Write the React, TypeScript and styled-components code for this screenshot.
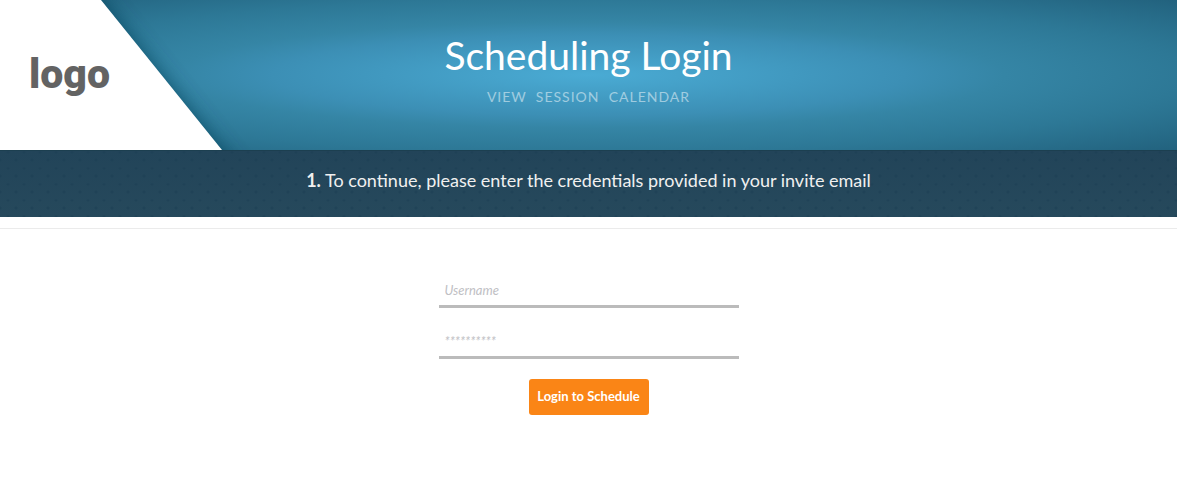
import React from 'react';
import styled, { createGlobalStyle } from 'styled-components';

const GlobalStyle = createGlobalStyle`
  *, *::before, *::after { box-sizing: border-box; }
  body {
    margin: 0;
    background: #fff;
    font-family: Lato, "Liberation Sans", sans-serif;
  }
`;

const Header = styled.header`
  position: relative;
  height: 150px;
  padding-top: 31px;
  overflow: hidden;
  text-align: center;
  color: #fff;
  background: radial-gradient(
    ellipse farthest-corner at center,
    #4aabd4 0%,
    #3c8fb5 38%,
    #3585a5 50%,
    #2d7896 72%,
    #22627e 100%
  );
`;

const Brand = styled.a`
  position: absolute;
  inset: 0 auto 0 0;
  width: 300px;
  display: flex;
  align-items: center;
  padding: 0 0 2px 29px;
  text-decoration: none;
`;

const BrandShape = styled.svg`
  position: absolute;
  inset: 0;
  width: 300px;
  height: 150px;
`;

const LogoText = styled.span`
  position: relative;
  color: #636363;
  font: 900 41px/48px Roboto, sans-serif;
`;

const Title = styled.h1`
  margin: 0;
  font-size: 39px;
  line-height: 48px;
  font-weight: 400;
`;

const Subtitle = styled.p`
  margin: 9px 0 0;
  font-size: 14px;
  line-height: 18px;
  letter-spacing: 1px;
  text-transform: uppercase;
  white-space: pre;
  color: rgba(255, 255, 255, 0.5);
`;

const StepBar = styled.div`
  position: relative;
  min-height: 67px;
  padding: 18px 16px 24px;
  border-top: 1px solid #1c3f50;
  text-align: center;
  font-size: 18px;
  line-height: 23px;
  color: #f0f0f0;
  background: linear-gradient(#224459, #26495c);
`;

const Dots = styled.svg`
  position: absolute;
  inset: 0;
  width: 100%;
  height: 100%;
`;

const StepText = styled.p`
  position: relative;
  margin: 0;
`;

const Main = styled.main`
  margin-top: 11px;
  padding: 48px 16px;
  border-top: 1px solid #ebebeb;
`;

const Form = styled.form`
  display: flex;
  flex-direction: column;
  align-items: center;
  gap: 20px;
`;

const Field = styled.input`
  width: 300px;
  max-width: 100%;
  height: 31px;
  padding: 0 6px 2px;
  border: 0;
  border-bottom: 3px solid #bbb;
  background: transparent;
  font: italic 13px/18px Lato, sans-serif;
  color: #555;
  outline: none;
  &::placeholder { color: #c0c0c4; opacity: 1; }
  &:focus { border-color: #3c90b6; }
`;

const Submit = styled.button`
  min-width: 120px;
  height: 36px;
  padding: 0 8px 2px;
  border: 0;
  border-radius: 3px;
  background: #fa8516;
  color: #fff;
  font: 700 13px/18px Lato, sans-serif;
  cursor: pointer;
`;

export default function App() {
  return (
    <>
      <GlobalStyle />
      <Header>
        <Brand href="#">
          <BrandShape viewBox="0 0 300 150" aria-hidden="true">
            <defs>
              <filter id="edge" x="-20%" y="-40%" width="160%" height="180%">
                <feGaussianBlur stdDeviation="10" />
              </filter>
            </defs>
            <path d="M-40-175 246 180H-40Z" fill="#0d4056" opacity=".75" filter="url(#edge)" />
            <path d="M0 0H101L222 150H0Z" fill="#fff" />
          </BrandShape>
          <LogoText>logo</LogoText>
        </Brand>
        <Title>Scheduling Login</Title>
        <Subtitle>{'View  Session  Calendar'}</Subtitle>
      </Header>
      <StepBar>
        <Dots aria-hidden="true">
          <defs>
            <pattern id="dots" width="16" height="16" patternUnits="userSpaceOnUse">
              <path d="M6 1 8 0 10 1 8 3ZM0 7 2 9 0 11ZM16 7V11L14 9Z" fill="#1c3e53" opacity=".5" />
            </pattern>
          </defs>
          <rect width="100%" height="100%" fill="url(#dots)" />
        </Dots>
        <StepText>
          <strong>1.</strong> To continue, please enter the credentials provided in your invite email
        </StepText>
      </StepBar>
      <Main>
        <Form onSubmit={(e) => e.preventDefault()}>
          <Field type="text" aria-label="Username" placeholder="Username" />
          <Field type="password" aria-label="Password" placeholder="**********" />
          <Submit type="submit">Login to Schedule</Submit>
        </Form>
      </Main>
    </>
  );
}
